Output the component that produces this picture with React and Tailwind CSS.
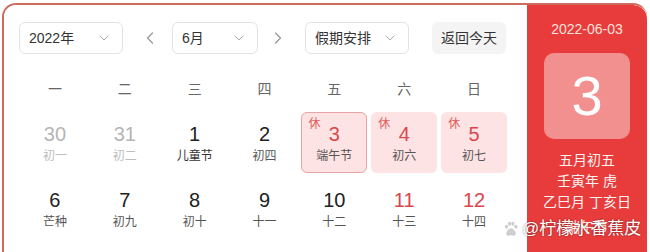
import { ChevronDown, ChevronLeft, ChevronRight } from 'lucide-react'

const WEEK = ['一', '二', '三', '四', '五', '六', '日']

const ROWS = [
  [
    { d: 30, l: '初一', dim: true },
    { d: 31, l: '初二', dim: true },
    { d: 1, l: '儿童节', fest: true },
    { d: 2, l: '初四' },
    { d: 3, l: '端午节', rest: true, sel: true },
    { d: 4, l: '初六', rest: true },
    { d: 5, l: '初七', rest: true },
  ],
  [
    { d: 6, l: '芒种' },
    { d: 7, l: '初九' },
    { d: 8, l: '初十' },
    { d: 9, l: '十一' },
    { d: 10, l: '十二' },
    { d: 11, l: '十三', wk: true },
    { d: 12, l: '十四', wk: true },
  ],
]

function Select({ label, width }) {
  return (
    <div
      className="flex h-[32px] items-center justify-between rounded-[6px] border border-[#e3e3e3] bg-white pl-[9px] pr-[10px] text-[14px] text-[#333]"
      style={{ width }}
    >
      <span>{label}</span>
      <ChevronDown size={16} strokeWidth={1.5} className="text-[#aaa]" />
    </div>
  )
}

function Day({ day }) {
  const red = day.rest || day.wk
  return (
    <div
      className={
        'relative mx-[2px] flex h-[61px] flex-col items-center rounded-[6px] pt-[9px] ' +
        (day.rest ? 'bg-[#fde3e3] ' : '') +
        (day.sel ? 'border border-[#e9a3a3] ' : 'border border-transparent ')
      }
    >
      {day.rest && (
        <span className="absolute left-[6px] top-[5px] text-[12px] leading-none text-[#e05a5a]">休</span>
      )}
      <span
        className={
          'text-[20px] leading-[24px] ' +
          (day.dim ? 'text-[#b5b5b5]' : red ? 'text-[#d9474d]' : 'text-[#222]')
        }
      >
        {day.d}
      </span>
      <span
        className={
          'mt-[1px] text-[12px] leading-[18px] ' +
          (day.dim ? 'text-[#bdbdbd]' : day.fest ? 'text-[#333]' : 'text-[#555]')
        }
      >
        {day.l}
      </span>
    </div>
  )
}

export default function App() {
  return (
    <div
      className="relative h-[252px] w-[650px] overflow-hidden bg-white"
      style={{ fontFamily: '"Liberation Sans", "Noto Sans CJK SC", sans-serif' }}
    >
      <div className="ml-[2px] mt-[3px] flex h-[260px] w-[645px] overflow-hidden rounded-t-[14px] border-l-2 border-t-2 border-[#cf6b5c]">
        <div className="w-[523px] bg-white pl-[15px] pt-[17px]">
          <div className="flex h-[32px] items-center">
            <Select label="2022年" width={104} />
            <ChevronLeft size={20} strokeWidth={1.5} className="ml-[17px] text-[#999]" />
            <div className="ml-[12px]">
              <Select label="6月" width={86} />
            </div>
            <ChevronRight size={20} strokeWidth={1.5} className="ml-[10px] text-[#999]" />
            <div className="ml-[17px]">
              <Select label="假期安排" width={104} />
            </div>
            <div className="ml-[23px] flex h-[32px] w-[74px] items-center justify-center rounded-[6px] bg-[#f4f4f4] text-[14px] text-[#333]">
              返回今天
            </div>
          </div>

          <div className="mt-[25px] grid w-[490px] grid-cols-7 pl-[1px]">
            {WEEK.map((w) => (
              <div key={w} className="text-center text-[14px] leading-[20px] text-[#666]">
                {w}
              </div>
            ))}
          </div>

          <div className="mt-[13px] flex w-[490px] flex-col gap-[5px] pl-[1px]">
            {ROWS.map((row, i) => (
              <div key={i} className="grid grid-cols-7">
                {row.map((day) => (
                  <Day key={day.d} day={day} />
                ))}
              </div>
            ))}
          </div>
        </div>

        <div className="flex flex-1 flex-col items-center rounded-tr-[14px] bg-[#e83c3c] pt-[15px]">
          <div className="text-[14px] leading-[18px] text-[#fde1d9]">2022-06-03</div>
          <div className="mt-[15px] flex h-[86px] w-[86px] items-center justify-center rounded-[10px] bg-[#f29090]">
            <span className="text-[56px] leading-none text-white">3</span>
          </div>
          <div className="mt-[11px] flex flex-col items-center text-[14px] leading-[21px] text-[#fff1ee]">
            <span>五月初五</span>
            <span>壬寅年 虎</span>
            <span>乙巳月 丁亥日</span>
            <span className="mt-[4px]">端午节</span>
          </div>
        </div>
      </div>

      <div className="absolute left-[502px] top-[218px] flex items-center">
        <svg width="18" height="18" viewBox="0 0 24 24" className="text-[#cfcfcf]" fill="currentColor">
          <ellipse cx="6" cy="9" rx="2.2" ry="2.8" />
          <ellipse cx="10" cy="5" rx="2.2" ry="2.8" />
          <ellipse cx="14.5" cy="5" rx="2.2" ry="2.8" />
          <ellipse cx="18.5" cy="9" rx="2.2" ry="2.8" />
          <path d="M12 11c-3 0-6.5 4.5-6.5 7 0 2 1.6 3 3.2 3 1.4 0 2.1-.7 3.3-.7s1.9.7 3.3.7c1.6 0 3.2-1 3.2-3 0-2.5-3.5-7-6.5-7z" />
        </svg>
        <span
          className="ml-[2px] text-[17px] leading-[22px] text-white"
          style={{ textShadow: '0 0 2px rgba(0,0,0,0.55)' }}
        >
          @柠檬水香蕉皮
        </span>
      </div>
    </div>
  )
}
